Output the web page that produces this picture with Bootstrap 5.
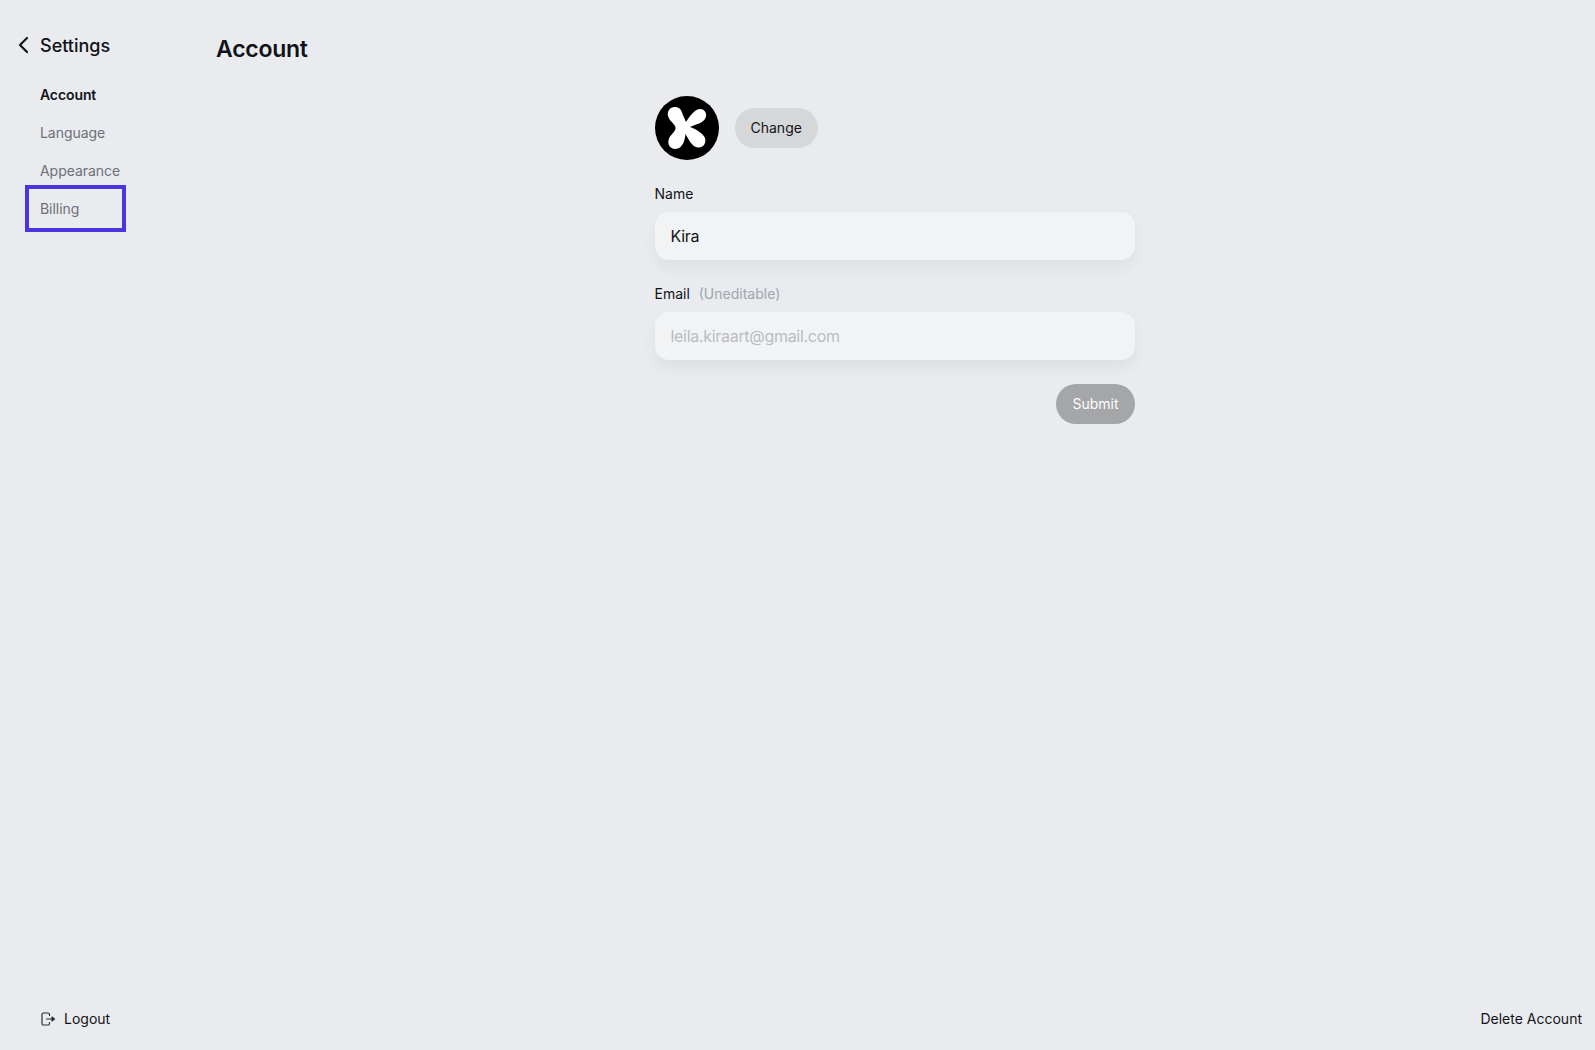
<!DOCTYPE html>
<html lang="en">
<head>
    <meta charset="UTF-8">
    <meta name="viewport" content="width=device-width, initial-scale=1.0">
    <title>Settings | Account</title>
    <link href="https://cdn.jsdelivr.net/npm/bootstrap@5.3.0/dist/css/bootstrap.min.css" rel="stylesheet">

    <style>
        body {
            font-family: 'Inter', 'Liberation Sans', sans-serif;
            background-color: #e9ebef;
            color: #111318;
            height: 100vh;
            overflow: hidden;
        }

        /* Sidebar */
        .side-col {
            width: 216px;
            padding-top: 31px;
        }
        .side-head {
            height: 28px;
            padding-left: 17px;
            gap: 10px;
            font-size: 18px;
            font-weight: 500;
            margin-bottom: 17px;
        }
        .side-link {
            display: block;
            height: 38px;
            line-height: 38px;
            padding-left: 40px;
            font-size: 14px;
            letter-spacing: -0.05px;
            color: #6d7079;
            text-decoration: none;
        }
        .side-link.current {
            color: #111318;
            font-weight: 600;
            letter-spacing: -0.1px;
        }
        .side-link.marked {
            position: relative;
        }
        .side-link.marked::after {
            content: "";
            position: absolute;
            left: 25px;
            top: 0;
            width: 101px;
            height: 47px;
            margin-top: -5px;
            border: 4px solid #4c35e0;
        }

        /* Main */
        .main-col {
            padding-right: 22px;
        }
        .page-title {
            font-size: 23px;
            font-weight: 600;
            line-height: 32px;
            letter-spacing: -0.25px;
            margin: 33px 0 0;
        }
        .form-box {
            width: 480px;
            margin: 31px auto 0;
        }
        .avatar-pic {
            width: 64px;
            height: 64px;
        }
        .pill-btn {
            height: 40px;
            padding: 0 16px;
            font-size: 14px;
            border: 0;
            border-radius: 20px;
        }
        .pill-btn.grey {
            background-color: #d6d7d9;
            color: #111318;
            padding-bottom: 1px;
        }
        .pill-btn.off {
            background-color: #a5a6a8;
            color: #fff;
            padding-bottom: 1px;
        }
        .field-label {
            display: block;
            font-size: 14px;
            line-height: 20px;
            margin-bottom: 8px;
        }
        .field-note {
            color: #a2a5ae;
            margin-left: 5px;
        }
        .form-control.field-input {
            height: 48px;
            padding: 0 16px;
            font-size: 16px;
            letter-spacing: -0.3px;
            color: #111318;
            background-color: #f2f3f5;
            border: 0;
            border-radius: 14px;
            box-shadow: 0 8px 16px rgba(0, 0, 0, 0.05);
        }
        .form-control.field-input::placeholder {
            color: #b9bcc5;
        }

        /* Bottom row */
        .foot-row {
            height: 42px;
            padding: 0 13px 0 40px;
            font-size: 14px;
        }
        .foot-row a {
            color: #111318;
            text-decoration: none;
        }
    </style>
</head>
<body class="d-flex flex-column">

    <div class="d-flex flex-grow-1">
        <!-- Sidebar -->
        <div class="side-col flex-shrink-0">
            <div class="side-head d-flex align-items-center">
                <svg width="13" height="18" viewBox="0 0 13 18" fill="none" stroke="#111318" stroke-width="2.200" stroke-linecap="round" stroke-linejoin="round"><path d="M10 2 3 9l7 7"/></svg>
                <span>Settings</span>
            </div>
            <a class="side-link current" href="#">Account</a>
            <a class="side-link" href="#">Language</a>
            <a class="side-link" href="#">Appearance</a>
            <a class="side-link marked" href="#">Billing</a>
        </div>

        <!-- Main -->
        <div class="main-col flex-grow-1">
            <h1 class="page-title">Account</h1>
            <div class="form-box">
                <div class="d-flex align-items-center gap-3 mb-4">
                    <svg class="avatar-pic" viewBox="0 0 64 64">
                        <circle cx="32" cy="32" r="32" fill="#000"/>
                        <path fill="#fff" d="M19.500 11C24 11 26.500 13.500 27.500 18L31 26C33.500 22 37.500 16 42.500 13.500C47.500 11.500 52 15.500 51 20.500C50 25 45 27.500 41 28.500L35 31C40.500 33 46.500 36.500 49.500 41C52 46 49 52 43 51.500C37 51 34 44 30.500 38C30 44 27.500 53 20.500 53C14.500 53 12 47.500 14 42.500C15.500 38.500 20.500 36 20.500 32C20.500 28 14.500 25.500 13 20C12 15 15 11 19.500 11Z"/>
                    </svg>
                    <button class="btn pill-btn grey" type="button">Change</button>
                </div>

                <div class="mb-4">
                    <label class="field-label" for="nameInput">Name</label>
                    <input class="form-control field-input" id="nameInput" type="text" value="Kira">
                </div>

                <div class="mb-4">
                    <label class="field-label" for="emailInput">Email <span class="field-note">(Uneditable)</span></label>
                    <input class="form-control field-input" id="emailInput" type="text" placeholder="leila.kiraart@gmail.com" readonly>
                </div>

                <div class="d-flex justify-content-end">
                    <button class="btn pill-btn off" type="button">Submit</button>
                </div>
            </div>
        </div>
    </div>

    <!-- Bottom row -->
    <div class="foot-row d-flex justify-content-between align-items-start flex-shrink-0">
        <a class="d-flex align-items-center gap-2" href="#">
            <svg width="16" height="16" viewBox="0 0 16 16" fill="none" stroke="#2b2d33" stroke-width="1.200" stroke-linecap="round" stroke-linejoin="round"><path d="M9.500 4.500V3.500A1.500 1.500 0 0 0 8 2H3.500A1.500 1.500 0 0 0 2 3.500v9A1.500 1.500 0 0 0 3.500 14H8a1.500 1.500 0 0 0 1.500-1.500v-1M6.500 8H12"/><path d="M12 6l2.500 2-2.500 2z" fill="#2b2d33"/></svg>
            <span>Logout</span>
        </a>
        <a href="#">Delete Account</a>
    </div>

    <script src="https://cdn.jsdelivr.net/npm/bootstrap@5.3.0/dist/js/bootstrap.bundle.min.js"></script>
</body>
</html>
